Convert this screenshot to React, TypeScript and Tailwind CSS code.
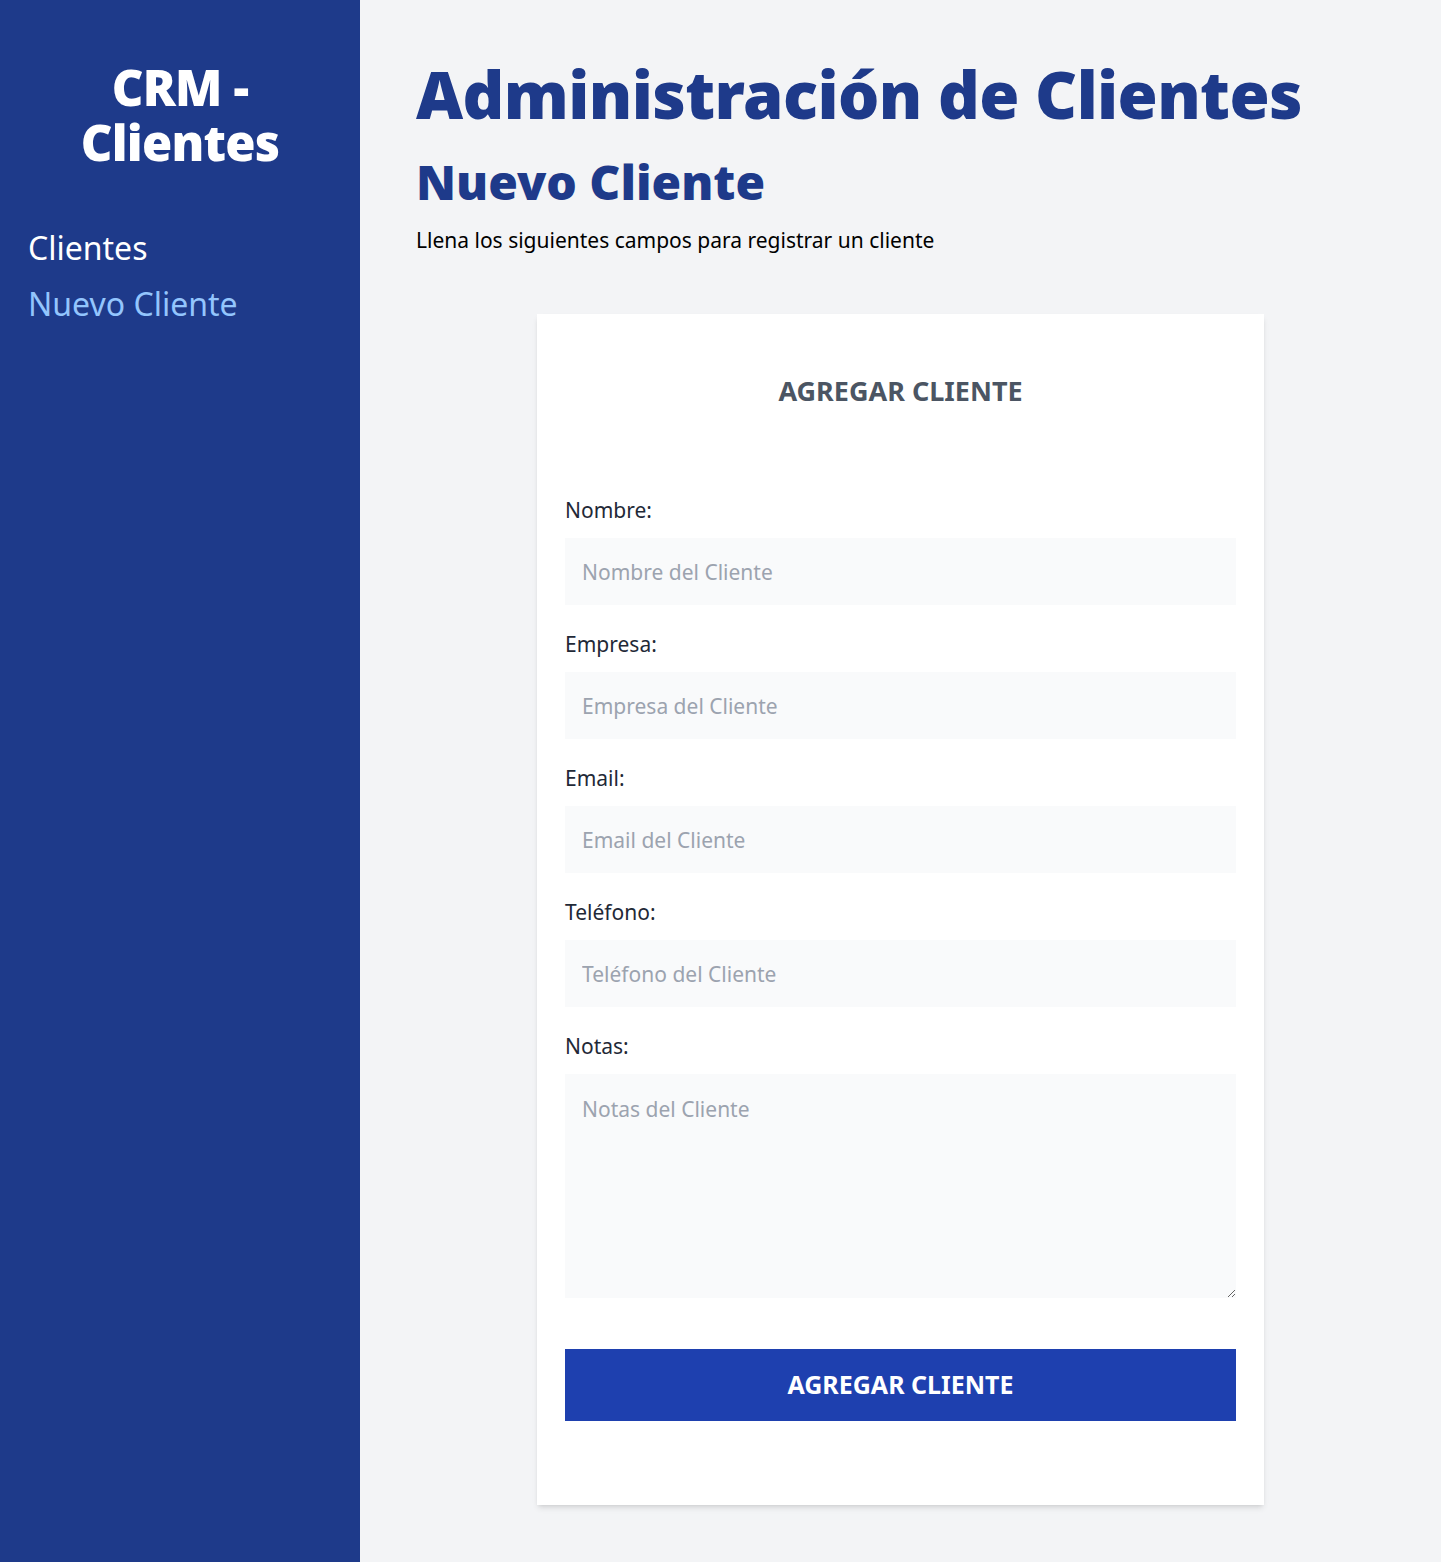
import React from "react";

const fields = [
  { label: "Nombre:", placeholder: "Nombre del Cliente", type: "text" },
  { label: "Empresa:", placeholder: "Empresa del Cliente", type: "text" },
  { label: "Email:", placeholder: "Email del Cliente", type: "email" },
  { label: "Teléfono:", placeholder: "Teléfono del Cliente", type: "tel" },
];

export default function App() {
  return (
    <div className="min-h-screen flex bg-[#f3f4f6] font-['Noto_Sans',sans-serif]">
      <aside className="w-[360px] shrink-0 bg-[#1e3a8a] px-[28px] pt-[60px]">
        <h2 className="text-white font-black text-[49px] leading-[55px] tracking-[-0.8px] text-center">
          <span className="block">CRM -</span>
          <span className="block">Clientes</span>
        </h2>
        <nav className="mt-[54px] flex flex-col gap-[8px] text-[32px] leading-[48px]">
          <a href="#" className="text-white block">Clientes</a>
          <a href="#" className="text-[#93c5fd] block">Nuevo Cliente</a>
        </nav>
      </aside>
      <main className="flex-1 p-[56px]">
        <h1 className="text-[#1e3a8a] font-black text-[65px] leading-[76px] tracking-[-0.6px]">
          Administración de Clientes
        </h1>
        <h2 className="mt-[22px] text-[#1e3a8a] font-black text-[48px] leading-[56px]">
          Nuevo Cliente
        </h2>
        <p className="mt-[14px] text-[21px] leading-[33px] text-black">
          Llena los siguientes campos para registrar un cliente
        </p>
        <div className="mt-[57px] mx-auto w-[727px] bg-white shadow-md px-[28px] pt-[59px] pb-[84px]">
          <h3 className="text-center uppercase font-bold text-[27px] leading-[36px] text-[#4b5563]">
            Agregar Cliente
          </h3>
          <form className="mt-[85px] flex flex-col gap-[23px]" onSubmit={(e) => e.preventDefault()}>
            {fields.map((f) => (
              <div key={f.label} className="flex flex-col gap-[12px]">
                <label className="text-[21px] leading-[32px] text-[#1f2937]">{f.label}</label>
                <input
                  type={f.type}
                  placeholder={f.placeholder}
                  className="h-[67px] w-full bg-[#f9fafb] px-[17px] text-[21px] text-[#1f2937] placeholder:text-[#9ca3af] outline-none"
                />
              </div>
            ))}
            <div className="flex flex-col gap-[12px]">
              <label className="text-[21px] leading-[32px] text-[#1f2937]">Notas:</label>
              <textarea
                placeholder="Notas del Cliente"
                className="h-[224px] w-full bg-[#f9fafb] px-[17px] pt-[19px] pb-[16px] text-[21px] leading-[33px] text-[#1f2937] placeholder:text-[#9ca3af] outline-none"
              />
            </div>
            <button
              type="submit"
              className="mt-[28px] h-[72px] w-full bg-[#1e40af] text-white font-bold uppercase text-[25px]"
            >
              Agregar Cliente
            </button>
          </form>
        </div>
      </main>
    </div>
  );
}
